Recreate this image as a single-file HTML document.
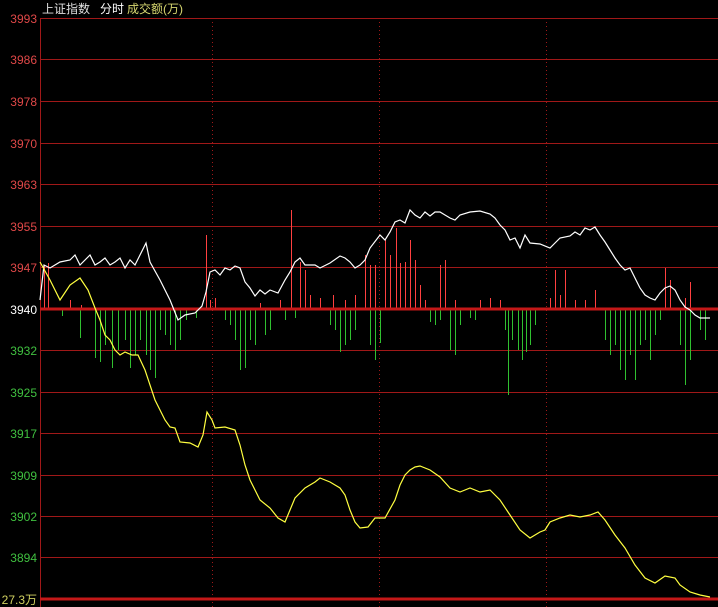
<!DOCTYPE html>
<html><head><meta charset="utf-8"><style>
html,body{margin:0;padding:0;background:#000;width:718px;height:607px;overflow:hidden}
svg{display:block}
text{font-family:"Liberation Sans","Noto Sans CJK SC",sans-serif;font-size:12px}
</style></head><body>
<svg width="718" height="607" viewBox="0 0 718 607">
<rect width="718" height="607" fill="#000"/>
<g stroke="#a01818" stroke-width="1">
<line x1="40" y1="18.5" x2="718" y2="18.5"/>
<line x1="40" y1="59.5" x2="718" y2="59.5"/>
<line x1="40" y1="101.5" x2="718" y2="101.5"/>
<line x1="40" y1="143.5" x2="718" y2="143.5"/>
<line x1="40" y1="184.5" x2="718" y2="184.5"/>
<line x1="40" y1="226.5" x2="718" y2="226.5"/>
<line x1="40" y1="267.5" x2="718" y2="267.5"/>
<line x1="40" y1="350.5" x2="718" y2="350.5"/>
<line x1="40" y1="392.5" x2="718" y2="392.5"/>
<line x1="40" y1="433.5" x2="718" y2="433.5"/>
<line x1="40" y1="475.5" x2="718" y2="475.5"/>
<line x1="40" y1="516.5" x2="718" y2="516.5"/>
<line x1="40" y1="557.5" x2="718" y2="557.5"/>
<line x1="40.5" y1="18" x2="40.5" y2="607"/>
</g>
<g stroke="#a01818" stroke-dasharray="1,3">
<line x1="212.5" y1="18" x2="212.5" y2="607"/>
<line x1="379.5" y1="18" x2="379.5" y2="607"/>
<line x1="546.5" y1="18" x2="546.5" y2="607"/>
</g>
<path fill="none" stroke="#ff4040" stroke-width="1" d="M44.5 309V265M48.5 309V263M70.5 309V300M81.5 309V305M206.5 309V235M210.5 309V300M215.5 309V298M260.5 309V303M280.5 309V300M291.5 309V210M300.5 309V262M305.5 309V270M310.5 309V295M320.5 309V298M333.5 309V295M345.5 309V300M355.5 309V295M365.5 309V255M370.5 309V265M375.5 309V265M385.5 309V240M390.5 309V255M396.5 309V228M400.5 309V263M405.5 309V262M410.5 309V240M415.5 309V260M420.5 309V285M425.5 309V300M440.5 309V265M445.5 309V260M455.5 309V300M480.5 309V300M490.5 309V298M500.5 309V300M550.5 309V298M555.5 309V270M560.5 309V295M565.5 309V270M575.5 309V300M585.5 309V300M595.5 309V290M665.5 309V268M670.5 309V280M685.5 309V298M690.5 309V282"/>
<path fill="none" stroke="#30c030" stroke-width="1" d="M62.5 309V316M80.5 309V338M90.5 309V310M95.5 309V358M100.5 309V362M105.5 309V345M112.5 309V368M118.5 309V350M125.5 309V340M130.5 309V368M135.5 309V355M140.5 309V340M146.5 309V355M150.5 309V370M155.5 309V378M160.5 309V330M165.5 309V335M170.5 309V345M175.5 309V350M180.5 309V340M186.5 309V320M196.5 309V318M225.5 309V320M230.5 309V325M235.5 309V340M240.5 309V370M245.5 309V368M250.5 309V340M255.5 309V345M265.5 309V335M270.5 309V330M285.5 309V320M295.5 309V318M330.5 309V325M335.5 309V330M340.5 309V352M345.5 309V345M350.5 309V340M355.5 309V330M370.5 309V345M375.5 309V360M380.5 309V343M430.5 309V322M435.5 309V325M440.5 309V320M450.5 309V350M455.5 309V355M460.5 309V325M470.5 309V318M475.5 309V320M505.5 309V330M508.5 309V395M512.5 309V340M518.5 309V350M522.5 309V360M526.5 309V352M530.5 309V345M535.5 309V325M605.5 309V340M610.5 309V355M615.5 309V345M620.5 309V370M625.5 309V380M630.5 309V355M635.5 309V380M640.5 309V345M645.5 309V340M650.5 309V360M655.5 309V335M660.5 309V320M680.5 309V345M685.5 309V385M690.5 309V360M700.5 309V330M705.5 309V340"/>
<rect x="40" y="307.5" width="678" height="3" fill="#c41818"/>
<rect x="40" y="597.5" width="678" height="3" fill="#c41818"/>
<polyline fill="none" stroke="#ffffff" stroke-width="1.2" points="40,300 44,265 50,268 60,262 70,260 75,255 80,265 90,255 95,265 100,262 105,258 110,265 115,262 120,258 125,268 130,260 135,265 140,255 146,243 150,262 160,280 170,300 178,320 185,315 195,313 202,306 206,292 210,272 215,270 220,275 225,268 230,270 235,266 240,268 245,282 250,288 255,296 260,290 265,294 270,290 278,293 285,280 290,272 295,262 300,258 305,265 315,265 320,268 330,263 340,256 345,258 350,262 355,268 360,265 365,260 370,248 380,235 385,240 390,232 395,222 400,220 405,223 410,210 415,215 420,218 425,212 430,216 435,212 440,212 445,215 450,218 455,220 460,215 470,212 480,211 490,214 495,218 500,225 505,230 510,240 515,238 520,248 525,235 530,243 540,244 550,248 555,243 560,238 570,236 575,232 580,235 585,228 590,230 595,227 600,235 605,242 610,250 615,258 620,265 625,270 630,268 635,278 640,288 645,295 650,298 655,300 660,293 665,288 670,286 675,290 680,300 685,307 690,310 695,315 700,318 710,318"/>
<polyline fill="none" stroke="#ffff40" stroke-width="1.2" points="40,262 50,280 60,300 70,285 80,278 88,290 95,308 100,320 105,335 110,340 115,350 120,355 125,352 132,355 138,355 145,370 150,385 155,400 160,410 165,420 170,427 175,428 180,442 190,443 198,447 203,435 207,412 212,420 215,428 225,427 235,430 240,445 245,465 250,480 255,490 260,500 270,508 278,518 285,522 290,510 295,498 305,488 315,482 320,478 330,482 340,488 345,495 350,510 355,522 360,528 368,527 375,518 385,518 395,500 400,485 405,475 410,470 415,467 420,466 430,470 440,477 450,488 460,492 470,488 480,492 490,490 500,500 510,515 520,530 530,538 540,532 545,530 550,522 560,518 570,515 580,517 590,515 598,512 605,520 615,535 625,548 635,565 645,578 655,583 665,576 675,578 680,585 690,592 700,595 710,597"/>
<g text-anchor="end">
<text x="37" y="23" fill="#e04848">3993</text>
<text x="37" y="64" fill="#e04848">3986</text>
<text x="37" y="106" fill="#e04848">3978</text>
<text x="37" y="148" fill="#e04848">3970</text>
<text x="37" y="189" fill="#e04848">3963</text>
<text x="37" y="231" fill="#e04848">3955</text>
<text x="37" y="272" fill="#e04848">3947</text>
<text x="37" y="314" fill="#ffffff">3940</text>
<text x="37" y="355" fill="#40c040">3932</text>
<text x="37" y="397" fill="#40c040">3925</text>
<text x="37" y="438" fill="#40c040">3917</text>
<text x="37" y="480" fill="#40c040">3909</text>
<text x="37" y="521" fill="#40c040">3902</text>
<text x="37" y="562" fill="#40c040">3894</text>
<text x="37" y="604" fill="#d0d060">27.3万</text>
</g>
<text x="42" y="13" fill="#e0e0e0">上证指数</text>
<text x="100" y="13" fill="#ffffff">分时</text>
<text x="127" y="13" fill="#d8d870">成交额(万)</text>
</svg>
</body></html>
